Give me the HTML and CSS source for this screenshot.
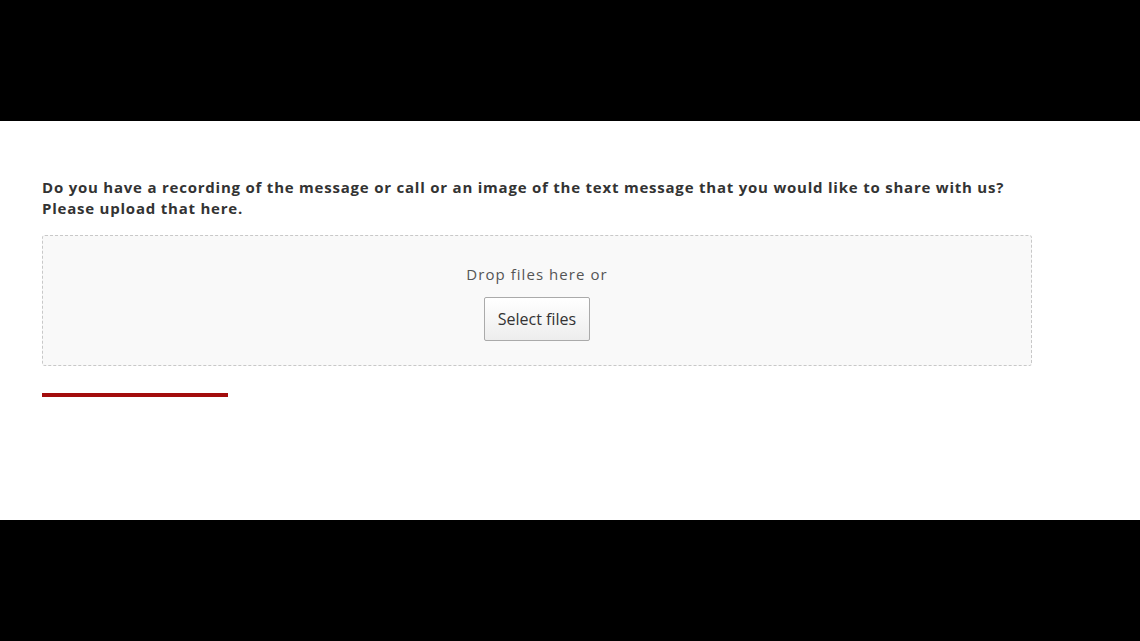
FILE: index.html
```html
<!DOCTYPE html>
<html lang="en">
<head>
    <meta charset="UTF-8">
    <meta name="viewport" content="width=device-width, initial-scale=1.0">
    <title>Upload</title>
    <link rel="stylesheet" href="styles.css">
</head>
<body>
    <div class="bar"></div>
    <div class="page">
        <p class="question">Do you have a recording of the message or call or an image of the text message that you would like to share with us? Please upload that here.</p>
        <div class="dropzone">
            <span class="drop-text">Drop files here or</span>
            <button class="select-btn">Select files</button>
        </div>
        <div class="rule"></div>
    </div>
    <div class="bar"></div>
</body>
</html>
```

FILE: styles.css
```css
body { margin: 0; background: #000; font-family: "Open Sans", "Liberation Sans", sans-serif; }
.bar { height: 121px; background: #000; }
.page { height: 399px; background: #fff; padding: 56px 42px 0; box-sizing: border-box; }
.question { margin: 0; width: 990px; font-size: 15px; font-weight: 700; line-height: 21px; letter-spacing: 0.78px; color: #333; }
.dropzone { margin-top: 16px; width: 990px; height: 131px; box-sizing: border-box; border: 1px dashed #c8c8c8; border-radius: 3px; background: #f9f9f9; display: flex; flex-direction: column; align-items: center; padding-top: 28px; }
.drop-text { font-size: 15px; color: #555; letter-spacing: 1.05px; line-height: 20px; }
.select-btn { margin-top: 13px; width: 106px; height: 44px; border: 1px solid #aaa; border-radius: 2px; background: linear-gradient(#fff, #ededed); font-family: inherit; font-size: 16px; color: #333; padding: 0; }
.rule { margin-top: 27px; width: 186px; height: 4px; background: #a30d0d; }
```
